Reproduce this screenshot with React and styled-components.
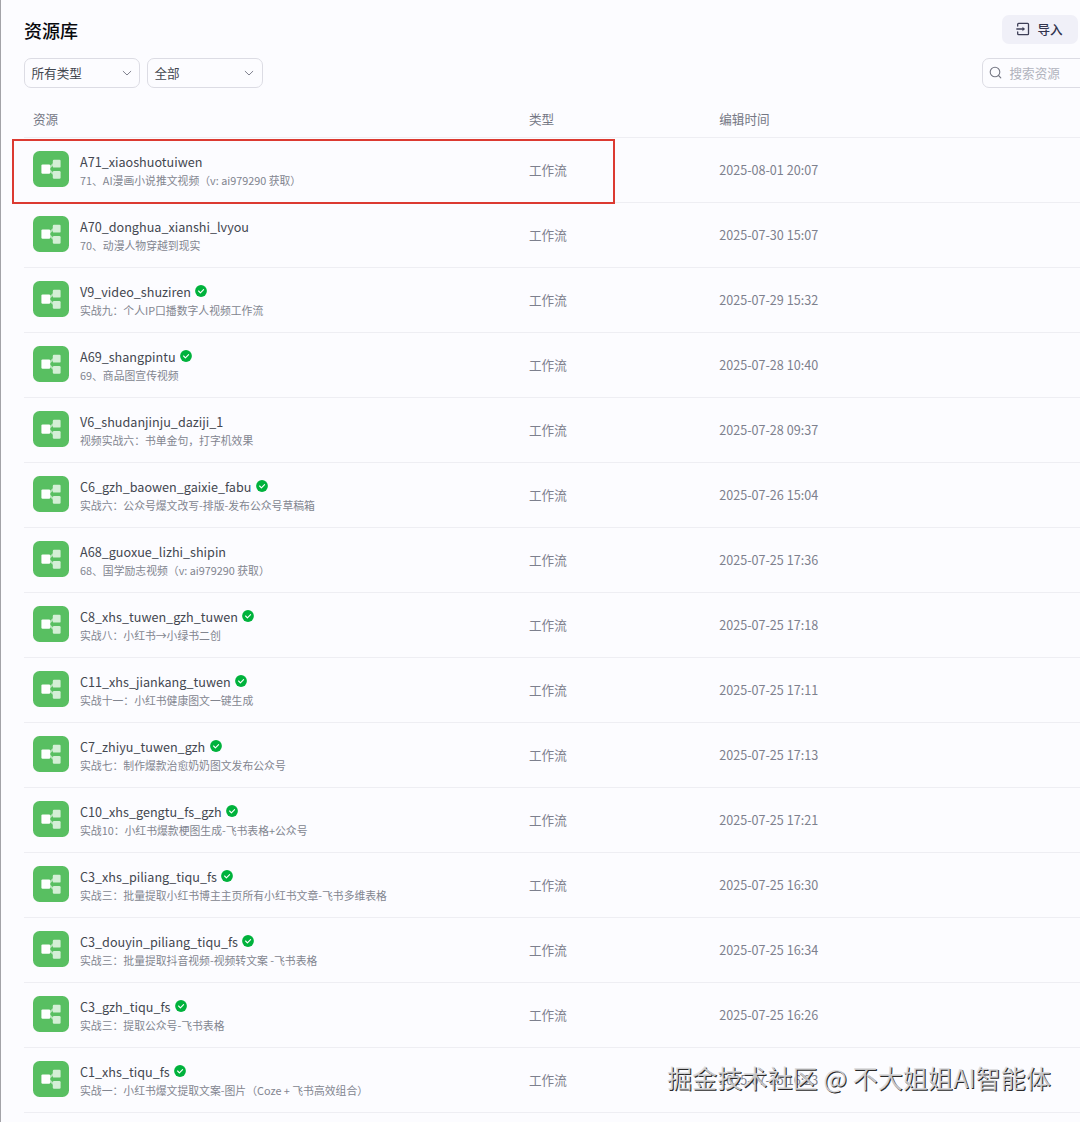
import React from "react";
import styled, { createGlobalStyle } from "styled-components";

const GlobalStyle = createGlobalStyle`
  * { box-sizing: border-box; }
  body {
    margin: 0;
    background: #fcfcff;
    font-family: "Noto Sans CJK SC", "Noto Sans", sans-serif;
    overflow: hidden;
  }
`;

const Page = styled.main`
  position: relative;
  width: 1080px;
  height: 1122px;
  overflow: hidden;
  padding: 15px 0 0 23px;
  border-left: 1px solid #a3a3a8;
  background: #fcfcff;
`;

const TitleBar = styled.header`
  display: flex;
  justify-content: space-between;
  align-items: center;
  height: 29px;
  padding-right: 2.5px;
`;

const Title = styled.h1`
  margin: 0;
  font-size: 18px;
  line-height: 28px;
  font-weight: 500;
  color: #08090d;
`;

const ImportButton = styled.button`
  display: flex;
  align-items: center;
  gap: 8px;
  width: 76px;
  height: 29px;
  padding: 0 0 1px 14px;
  border: 0;
  border-radius: 7px;
  background: #f0f0f8;
  color: #32334d;
  font: 500 12.6px/18px "Noto Sans CJK SC", sans-serif;
`;

const Toolbar = styled.div`
  display: flex;
  gap: 7px;
  margin-top: 14px;
  height: 30px;
`;

const Select = styled.div`
  display: flex;
  align-items: center;
  justify-content: space-between;
  width: 116px;
  height: 30px;
  padding: 0 7px 0 6.5px;
  border: 1px solid #dcdce4;
  border-radius: 7px;
  font-size: 12.6px;
  line-height: 18px;
  color: #42464e;
`;

const Search = styled.div`
  display: flex;
  align-items: center;
  gap: 7.5px;
  width: 110px;
  height: 30px;
  margin-left: auto;
  margin-right: -12px;
  padding: 0 0 1px 6px;
  border: 1px solid #dcdce4;
  border-radius: 7px;
  font-size: 12.6px;
  line-height: 18px;
  color: #b1b3bd;
`;

const Columns = styled.div`
  display: grid;
  grid-template-columns: 496px 190.2px 1fr;
  align-items: center;
  padding-left: 9px;
  border-bottom: 1px solid #eeeef3;
  font-size: 12.6px;
  line-height: 18px;
  color: #7d808d;
`;

const TableHead = styled(Columns)`
  height: 50px;
  padding-top: 13px;
  color: #747784;
`;

const Row = styled(Columns)`
  height: 65px;
`;

const Resource = styled.div`
  display: flex;
  align-items: center;
  gap: 11px;
  padding-bottom: 2px;
`;

const Texts = styled.div`
  display: flex;
  flex-direction: column;
  padding-top: 2px;
`;

const NameLine = styled.div`
  display: flex;
  align-items: center;
  gap: 4.4px;
  height: 19px;
  font-size: 12.62px;
  line-height: 19px;
  color: #434750;
  white-space: nowrap;
`;

const Description = styled.div`
  height: 17px;
  margin-top: 1px;
  font-size: 10.83px;
  line-height: 17px;
  color: #82858f;
  white-space: nowrap;
`;

const Cell = styled.span`
  white-space: nowrap;
  padding-bottom: 1px;
`;

const Highlight = styled.div`
  position: absolute;
  left: 11px;
  top: 139px;
  width: 603px;
  height: 65px;
  border: 2px solid #dc3a31;
`;

const Watermark = styled.div`
  position: absolute;
  left: 666px;
  top: 1059px;
  font-size: 25.1px;
  line-height: 36px;
  white-space: nowrap;
  color: rgba(218, 218, 220, 0.88);
  text-shadow: 1px 1px 0.5px #2a2a2a;
`;

const ChevronMark = styled.svg`
  flex: none;
  margin-right: ${({ $inset }) => $inset}px;
`;

const Chevron = ({ inset = 0 }) => (
  <ChevronMark $inset={inset} width="10" height="10" viewBox="0 0 10 10" fill="none" stroke="#7f818e" strokeWidth="1">
    <path d="M1.2 3.3 5 7l3.8-3.7" strokeLinecap="round" strokeLinejoin="round" />
  </ChevronMark>
);

const ImportIcon = () => (
  <svg width="14" height="14" viewBox="0 0 14 14" fill="none" stroke="#3d3e56" strokeWidth="1.3" strokeLinecap="round" strokeLinejoin="round">
    <path d="M1.7 4V2.2q0-.9.9-.9h9q.9 0 .9.9v9.6q0 .9-.9.9h-9q-.9 0-.9-.9V10M.8 7h7" />
    <path d="m6.5 4.8 2.4 2.2-2.4 2.2z" fill="#3d3e56" stroke="none" />
  </svg>
);

const SearchIcon = () => (
  <svg width="13" height="13" viewBox="0 0 13 13" fill="none" stroke="#757784" strokeWidth="1.1" strokeLinecap="round">
    <circle cx="6" cy="6" r="4.8" />
    <path d="m9.5 9.5 2.3 2.3" />
  </svg>
);

const WorkflowIcon = () => (
  <svg width="36" height="36" viewBox="0 0 36 36">
    <rect width="36" height="36" rx="6.5" fill="#58bf61" />
    <path d="M15.5 17.5 20.5 13M15.5 18.5l5 4.5" stroke="#b4e2b8" strokeWidth="2" />
    <rect x="19.8" y="8.8" width="7.8" height="7.8" rx="1.2" fill="#d4efd6" />
    <rect x="19.8" y="20" width="7.8" height="7.8" rx="1.2" fill="#d4efd6" />
    <rect x="8.4" y="13.4" width="8.8" height="9.4" rx="1.2" fill="#fff" />
  </svg>
);

const VerifiedMark = styled.svg`
  flex: none;
  margin-bottom: 1px;
`;

const Verified = () => (
  <VerifiedMark width="12" height="12" viewBox="0 0 12 12" fill="none">
    <circle cx="6" cy="6" r="5.9" fill="#00b23c" />
    <path d="m3.6 6 1.8 1.8 3.2-3.2" stroke="#fff" strokeWidth="1.1" strokeLinecap="round" strokeLinejoin="round" />
  </VerifiedMark>
);

const resources = [
  ["A71_xiaoshuotuiwen", "71、AI漫画小说推文视频（v: ai979290 获取）", "2025-08-01 20:07", false],
  ["A70_donghua_xianshi_lvyou", "70、动漫人物穿越到现实", "2025-07-30 15:07", false],
  ["V9_video_shuziren", "实战九：个人IP口播数字人视频工作流", "2025-07-29 15:32", true],
  ["A69_shangpintu", "69、商品图宣传视频", "2025-07-28 10:40", true],
  ["V6_shudanjinju_daziji_1", "视频实战六：书单金句，打字机效果", "2025-07-28 09:37", false],
  ["C6_gzh_baowen_gaixie_fabu", "实战六：公众号爆文改写-排版-发布公众号草稿箱", "2025-07-26 15:04", true],
  ["A68_guoxue_lizhi_shipin", "68、国学励志视频（v: ai979290 获取）", "2025-07-25 17:36", false],
  ["C8_xhs_tuwen_gzh_tuwen", "实战八：小红书→小绿书二创", "2025-07-25 17:18", true],
  ["C11_xhs_jiankang_tuwen", "实战十一：小红书健康图文一键生成", "2025-07-25 17:11", true],
  ["C7_zhiyu_tuwen_gzh", "实战七：制作爆款治愈奶奶图文发布公众号", "2025-07-25 17:13", true],
  ["C10_xhs_gengtu_fs_gzh", "实战10：小红书爆款梗图生成-飞书表格+公众号", "2025-07-25 17:21", true],
  ["C3_xhs_piliang_tiqu_fs", "实战三：批量提取小红书博主主页所有小红书文章-飞书多维表格", "2025-07-25 16:30", true],
  ["C3_douyin_piliang_tiqu_fs", "实战三：批量提取抖音视频-视频转文案 -飞书表格", "2025-07-25 16:34", true],
  ["C3_gzh_tiqu_fs", "实战三：提取公众号-飞书表格", "2025-07-25 16:26", true],
  ["C1_xhs_tiqu_fs", "实战一：小红书爆文提取文案-图片（Coze + 飞书高效组合）", "2025-07-25 16:23", true],
];

export default function App() {
  return (
    <>
      <GlobalStyle />
      <Page lang="zh-CN">
        <TitleBar>
          <Title>资源库</Title>
          <ImportButton><ImportIcon />导入</ImportButton>
        </TitleBar>
        <Toolbar>
          <Select>所有类型<Chevron /></Select>
          <Select>全部<Chevron inset={1} /></Select>
          <Search><SearchIcon />搜索资源</Search>
        </Toolbar>
        <TableHead>
          <span>资源</span>
          <span>类型</span>
          <span>编辑时间</span>
        </TableHead>
        {resources.map(([name, description, edited, verified]) => (
          <Row key={name}>
            <Resource>
              <WorkflowIcon />
              <Texts>
                <NameLine>{name}{verified && <Verified />}</NameLine>
                <Description>{description}</Description>
              </Texts>
            </Resource>
            <Cell>工作流</Cell>
            <Cell>{edited}</Cell>
          </Row>
        ))}
        <Highlight />
        <Watermark>掘金技术社区 @ 不大姐姐AI智能体</Watermark>
      </Page>
    </>
  );
}
